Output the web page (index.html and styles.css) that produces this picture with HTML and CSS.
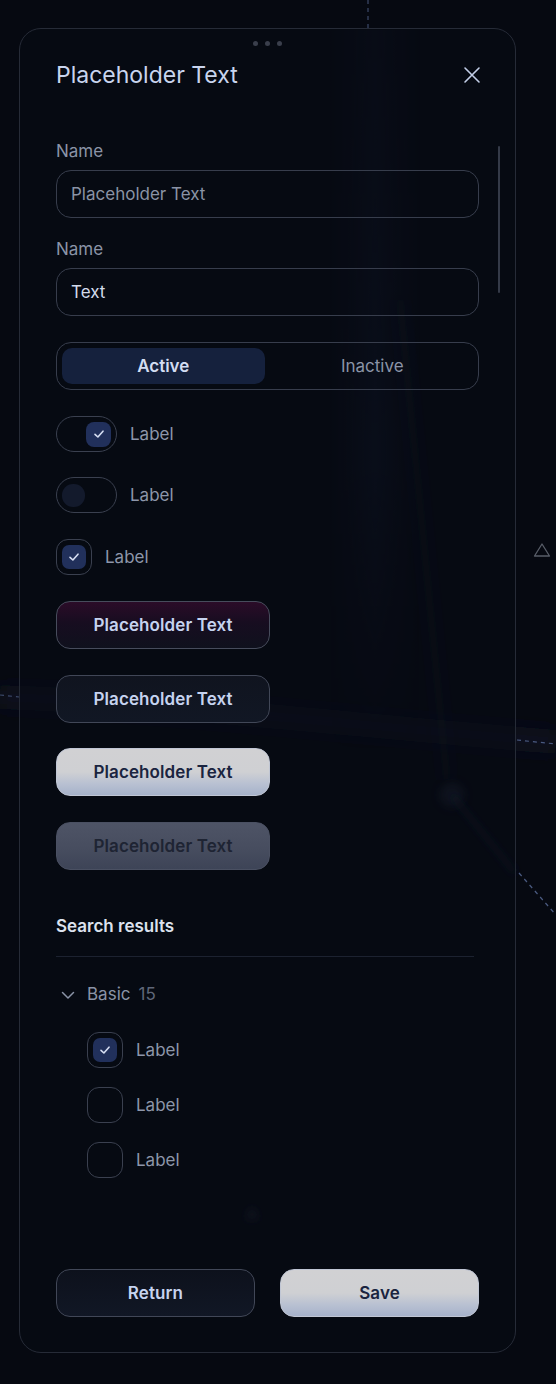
FILE: index.html
```html
<!DOCTYPE html>
<html lang="en">
<head>
<meta charset="utf-8">
<title>Panel</title>
<link rel="stylesheet" href="styles.css">
</head>
<body>
<svg class="backdrop" width="556" height="1384" viewBox="0 0 556 1384" aria-hidden="true">
  <defs>
    <filter id="blur8" x="-50%" y="-50%" width="200%" height="200%"><feGaussianBlur stdDeviation="8"/></filter>
    <filter id="blur4" x="-50%" y="-50%" width="200%" height="200%"><feGaussianBlur stdDeviation="4"/></filter>
    <linearGradient id="shaftH" x1="0" y1="0" x2="1" y2="0">
      <stop offset="0" stop-color="#161e34" stop-opacity="0"/>
      <stop offset="0.5" stop-color="#161e34" stop-opacity="0.45"/>
      <stop offset="1" stop-color="#161e34" stop-opacity="0"/>
    </linearGradient>
    <linearGradient id="fadeV" x1="0" y1="0" x2="0" y2="1">
      <stop offset="0" stop-color="#fff" stop-opacity="0.6"/>
      <stop offset="0.6" stop-color="#fff" stop-opacity="1"/>
      <stop offset="1" stop-color="#fff" stop-opacity="0"/>
    </linearGradient>
    <mask id="shaftMask"><rect x="330" y="30" width="90" height="720" fill="url(#fadeV)"/></mask>
  </defs>
  <rect x="330" y="30" width="90" height="720" fill="url(#shaftH)" mask="url(#shaftMask)"/>
  <path d="M400 300 L447 780" stroke="#151d32" stroke-width="12" stroke-opacity="0.3" filter="url(#blur8)"/>
  <path d="M0 697 C150 702 350 725 556 742" stroke="#141c31" stroke-width="24" stroke-opacity="0.4" fill="none" filter="url(#blur8)"/>
  <circle cx="452" cy="795" r="12" fill="#1d2230" opacity="0.8" filter="url(#blur4)"/>
  <path d="M452 795 L515 873" stroke="#161c2a" stroke-width="6" stroke-opacity="0.7" filter="url(#blur4)"/>
  <path d="M252 1206 L259 1219 L245 1219 Z" fill="#1d222d" filter="url(#blur4)"/>
  <path d="M368 0 L368 28" stroke="#3c4a6a" stroke-width="1.2" stroke-dasharray="4 4"/>
  <path d="M0 695 L19 697" stroke="#3c4a6a" stroke-width="1.2" stroke-dasharray="4 4"/>
  <path d="M517 740 L556 744" stroke="#4a5a80" stroke-width="1.2" stroke-dasharray="4 4"/>
  <path d="M519 873 L556 915" stroke="#4a5a80" stroke-width="1.2" stroke-dasharray="4 4"/>
  <path d="M542 544 L549.5 556 L534.5 556 Z" fill="none" stroke="#585d68" stroke-width="1.3" stroke-linejoin="round"/>
</svg>

<main class="panel">
  <div class="grabber"><span></span><span></span><span></span></div>
  <header class="panel-head">
    <h1 class="title">Placeholder Text</h1>
    <button class="close" aria-label="Close">
      <svg width="18" height="18" viewBox="0 0 18 18"><path d="M2 2 L16 16 M16 2 L2 16" stroke="#c3cfe8" stroke-width="1.6" stroke-linecap="round"/></svg>
    </button>
  </header>
  <div class="scroll-thumb"></div>

  <section class="form">
    <div class="field">
      <label class="field-label">Name</label>
      <div class="input placeholder">Placeholder Text</div>
    </div>
    <div class="field second">
      <label class="field-label">Name</label>
      <div class="input filled">Text</div>
    </div>

    <div class="segmented">
      <div class="seg active">Active</div>
      <div class="seg">Inactive</div>
    </div>

    <div class="row toggle-row">
      <div class="toggle on"><span class="knob">
        <svg width="14" height="14" viewBox="0 0 14 14"><path d="M3 7.3 L5.9 10 L11 4.2" fill="none" stroke="#d6def2" stroke-width="1.6" stroke-linecap="round" stroke-linejoin="round"/></svg>
      </span></div>
      <span class="row-label">Label</span>
    </div>
    <div class="row toggle-row">
      <div class="toggle off"><span class="knob"></span></div>
      <span class="row-label">Label</span>
    </div>
    <div class="row check-row">
      <div class="checkbox checked"><span class="box">
        <svg width="14" height="14" viewBox="0 0 14 14"><path d="M3 7.3 L5.9 10 L11 4.2" fill="none" stroke="#d6def2" stroke-width="1.6" stroke-linecap="round" stroke-linejoin="round"/></svg>
      </span></div>
      <span class="row-label">Label</span>
    </div>

    <button class="btn btn-accent">Placeholder Text</button>
    <button class="btn btn-dark">Placeholder Text</button>
    <button class="btn btn-light">Placeholder Text</button>
    <button class="btn btn-muted">Placeholder Text</button>
  </section>

  <section class="results">
    <h2 class="results-title">Search results</h2>
    <div class="divider"></div>
    <div class="group-head">
      <svg class="chev" width="14" height="14" viewBox="0 0 14 14"><path d="M1.5 4.5 L7 10 L12.5 4.5" fill="none" stroke="#8a93a6" stroke-width="1.5" stroke-linecap="round" stroke-linejoin="round"/></svg>
      <span class="group-name">Basic</span>
      <span class="group-count">15</span>
    </div>
    <ul class="result-list">
      <li class="row check-row">
        <div class="checkbox checked"><span class="box">
          <svg width="14" height="14" viewBox="0 0 14 14"><path d="M3 7.3 L5.9 10 L11 4.2" fill="none" stroke="#d6def2" stroke-width="1.6" stroke-linecap="round" stroke-linejoin="round"/></svg>
        </span></div>
        <span class="row-label">Label</span>
      </li>
      <li class="row check-row">
        <div class="checkbox"></div>
        <span class="row-label">Label</span>
      </li>
      <li class="row check-row">
        <div class="checkbox"></div>
        <span class="row-label">Label</span>
      </li>
    </ul>
  </section>

  <footer class="panel-foot">
    <button class="btn btn-dark foot-btn">Return</button>
    <button class="btn btn-light foot-btn">Save</button>
  </footer>
</main>
</body>
</html>
```

FILE: styles.css
```css
* { box-sizing: border-box; }

html, body {
  margin: 0;
  padding: 0;
}

body {
  width: 556px;
  height: 1384px;
  background: #060911;
  font-family: Inter, "Noto Sans", "Liberation Sans", sans-serif;
  color: #c8d3ea;
  position: relative;
  overflow: hidden;
}

.backdrop {
  position: absolute;
  left: 0;
  top: 0;
  z-index: 0;
  pointer-events: none;
}

.panel {
  position: relative;
  z-index: 1;
  margin: 28px 0 0 19px;
  width: 497px;
  height: 1325px;
  border: 1px solid #262b37;
  border-radius: 22px;
  background: rgba(8, 11, 20, 0.55);
  padding: 0 36px 35px;
  display: flex;
  flex-direction: column;
}

.grabber {
  margin-top: 12px;
  height: 5px;
  display: flex;
  justify-content: center;
  gap: 7px;
}
.grabber span {
  width: 5px;
  height: 5px;
  border-radius: 50%;
  background: #3a3f4c;
}

.panel-head {
  margin-top: 10px;
  height: 38px;
  display: flex;
  align-items: center;
  justify-content: space-between;
}

.title {
  margin: 0;
  font-size: 23px;
  font-weight: 400;
  color: #c9d5ee;
  letter-spacing: 0;
}

.close {
  background: none;
  border: 0;
  padding: 0;
  width: 18px;
  height: 18px;
  margin-right: -2px;
  display: flex;
}

.scroll-thumb {
  position: absolute;
  left: 478px;
  top: 117px;
  width: 2px;
  height: 147px;
  border-radius: 1px;
  background: #343a48;
}

.form {
  margin-top: 47px;
  display: flex;
  flex-direction: column;
}

.field {
  display: flex;
  flex-direction: column;
  gap: 9px;
}
.field.second { margin-top: 21px; }

.field-label {
  font-size: 17px;
  line-height: 20px;
  color: #8b94a7;
}

.input {
  height: 48px;
  border: 1px solid #373d4c;
  border-radius: 15px;
  padding: 0 14px;
  display: flex;
  align-items: center;
  font-size: 17px;
}
.input.placeholder { color: #8a93a5; }
.input.filled { color: #d3dbeb; }

.segmented {
  margin-top: 26px;
  height: 48px;
  border: 1px solid #373d4c;
  border-radius: 15px;
  padding: 5px;
  display: grid;
  grid-template-columns: 1fr 1fr;
}
.seg {
  display: flex;
  align-items: center;
  justify-content: center;
  border-radius: 10px;
  font-size: 17px;
  color: #8b94a7;
}
.seg.active {
  background: #15213d;
  color: #d3ddf2;
  font-weight: 600;
  margin-right: 3px;
}
.seg:not(.active) { padding-left: 4px; }

.row {
  display: flex;
  align-items: center;
}
.row-label {
  font-size: 17px;
  color: #8d96aa;
}

.toggle-row { margin-top: 26px; gap: 13px; }
.toggle-row + .toggle-row { margin-top: 25px; }
.check-row { margin-top: 26px; gap: 13px; }

.toggle {
  width: 61px;
  height: 36px;
  border: 1px solid #3a404f;
  border-radius: 18px;
  padding: 0 5px;
  display: flex;
  align-items: center;
}
.toggle.on { justify-content: flex-end; }
.toggle .knob {
  width: 25px;
  height: 25px;
  border-radius: 8px;
  display: flex;
  align-items: center;
  justify-content: center;
}
.toggle.on .knob { background: #21305b; }
.toggle.off .knob {
  width: 23px;
  height: 23px;
  border-radius: 11px;
  background: #131a2c;
}

.checkbox {
  width: 36px;
  height: 36px;
  border: 1px solid #3a404f;
  border-radius: 12px;
  display: flex;
  align-items: center;
  justify-content: center;
  flex: none;
}
.checkbox .box {
  width: 24px;
  height: 24px;
  border-radius: 7px;
  background: #21305b;
  display: flex;
  align-items: center;
  justify-content: center;
}

.btn {
  font-family: Inter, "Noto Sans", "Liberation Sans", sans-serif;
  height: 48px;
  border-radius: 14px;
  font-size: 17px;
  font-weight: 600;
  letter-spacing: 0.1px;
  display: flex;
  align-items: center;
  justify-content: center;
  padding: 0;
  cursor: pointer;
}

.form .btn {
  width: 214px;
  margin-top: 26px;
}
.form .btn-dark { margin-top: 26px; }
.form .btn-light { margin-top: 25px; }

.btn-accent {
  border: 1px solid #474c5c;
  background: linear-gradient(180deg, #2b0c28 0%, #170d20 45%, #0f111d 100%);
  color: #c6d3ef;
}
.btn-dark {
  border: 1px solid #414757;
  background: linear-gradient(180deg, #10141f 0%, #111724 100%);
  color: #c6d3ef;
}
.btn-light {
  border: 1px solid #c0c6d4;
  background: linear-gradient(180deg, #d1d1d3 0%, #cfd0d3 50%, #b9c1d2 75%, #a6b2ca 100%);
  color: #1a2440;
}
.btn-muted {
  border: 1px solid #4a5062;
  background: linear-gradient(180deg, #4e5466 0%, #474d5f 55%, #3d4457 100%);
  color: #1e2433;
}

.results {
  margin-top: 45px;
  display: flex;
  flex-direction: column;
}
.results-title {
  margin: 0;
  font-size: 17px;
  line-height: 22px;
  font-weight: 600;
  color: #dce2ee;
}
.divider {
  margin-top: 19px;
  width: 418px;
  height: 1px;
  background: #1c2230;
}
.group-head {
  margin-top: 27px;
  height: 20px;
  display: flex;
  align-items: center;
  padding-left: 5px;
}
.chev { margin-right: 12px; margin-top: 1px; }
.group-name {
  font-size: 17px;
  color: #8a93a6;
}
.group-count {
  font-size: 17px;
  color: #5f6779;
  margin-left: 8px;
}

.result-list {
  list-style: none;
  margin: 28px 0 0;
  padding: 0 0 0 31px;
  display: flex;
  flex-direction: column;
  gap: 19px;
}
.result-list .check-row { margin-top: 0; }

.panel-foot {
  margin-top: auto;
  display: grid;
  grid-template-columns: 199px 199px;
  justify-content: space-between;
  padding-right: 0;
}
.foot-btn { width: 100%; }
.panel-foot .btn-dark {
  background: linear-gradient(180deg, #0d111c 0%, #111725 100%);
}
```
